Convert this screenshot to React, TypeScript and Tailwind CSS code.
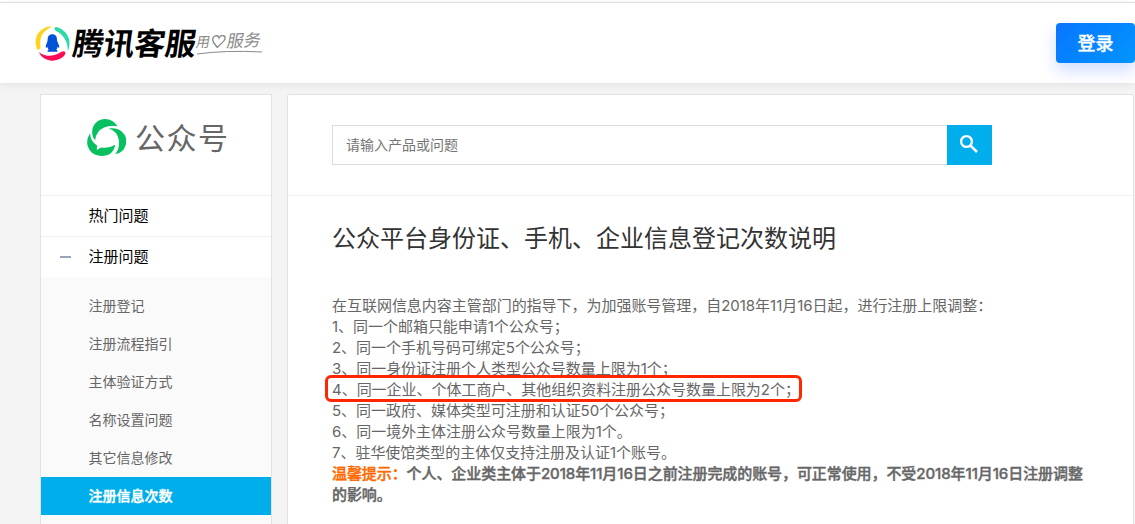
import { useState } from "react";
import clsx from "clsx";

const menuItems = [
  "注册登记",
  "注册流程指引",
  "主体验证方式",
  "名称设置问题",
  "其它信息修改",
  "注册信息次数",
];

const rules = [
  "1、同一个邮箱只能申请1个公众号；",
  "2、同一个手机号码可绑定5个公众号；",
  "3、同一身份证注册个人类型公众号数量上限为1个；",
  "4、同一企业、个体工商户、其他组织资料注册公众号数量上限为2个；",
  "5、同一政府、媒体类型可注册和认证50个公众号；",
  "6、同一境外主体注册公众号数量上限为1个。",
  "7、驻华使馆类型的主体仅支持注册及认证1个账号。",
];

const TencentIcon = () => (
  <svg viewBox="46 76 105 105" className="h-[35px] w-[35px] shrink-0">
    <path d="M98 78 Q74 76 58 95 Q42 116 51 144 Q54 149 60 145 Q64 142 62 134 Q59 108 76 92 Q86 82 98 78Z" fill="#ffd21f" />
    <path d="M105 82 Q106 78 113 80 Q139 89 148 115 Q152 134 145 151 Q144 120 126 102 Q118 95 109 91 Q104 88 105 82Z" fill="#2ad9a5" />
    <path d="M57 154 Q66 163 82 165 Q104 167 124 154 Q132 149 137 155 Q139 161 132 167 Q116 181 95 180 Q69 178 57 154Z" fill="#ff0a55" />
    <path d="M98 101 C88 101 84 108 84 117 C84 124 78 131 78 139 Q79 144 84 139 Q84 144 87 147 Q82 149 84 153 H113 Q115 149 110 147 Q113 144 113 139 Q118 144 119 139 C119 131 112 124 112 117 C112 108 108 101 98 101Z" fill="#0052d9" />
  </svg>
);

const AccountIcon = () => (
  <svg viewBox="171 101 117 112" className="h-[37px] w-[39px] shrink-0" fill="#07c160">
    <path d="M195 165 Q186 155 186 140 A39 39 0 0 1 225 101 Q250 102 263 123 Q242 118 222 127 Q198 138 195 165Z" />
    <path d="M236 130 Q262 126 277 140 A39 39 0 0 1 256 207 Q270 190 267 165 Q262 138 236 130Z" />
    <path d="M180 144 Q180 168 201 181 L200 195 L213 187 Q237 191 256 179 Q250 213 214 213 Q181 212 172 181 Q168 161 180 144Z" />
  </svg>
);

const SearchIcon = () => (
  <svg viewBox="0 0 24 24" className="mr-[2px] mb-[2px] h-6 w-6" fill="none" stroke="currentColor">
    <circle cx="9.5" cy="9.5" r="5.4" strokeWidth="2.3" />
    <path d="M13.6 13.6 L20 20" strokeWidth="2.6" />
  </svg>
);

const Header = () => (
  <header className="relative z-10 flex h-[81px] shrink-0 items-center justify-between border-t border-[#dcdcdc] bg-white pl-[35px] shadow-[0_2px_8px_rgba(0,0,0,0.07)]">
    <div className="flex items-center">
      <TencentIcon />
      <span className="ml-[3px] inline-block -skew-x-[8deg] text-[31px] leading-[35px] font-bold tracking-[-0.2px] whitespace-nowrap text-black">
        腾讯客服
      </span>
      <div className="flex w-[67px] flex-col text-[#8a8a8a]">
        <div className="flex -skew-x-[12deg] -rotate-2 items-center text-[14px] leading-[18px]">
          <span>用</span>
          <svg viewBox="0 0 18 16" className="h-[14px] w-[17px] shrink-0" fill="none" stroke="currentColor" strokeWidth="1.5">
            <path d="M9 4 C7 0 1 1 2 6 C3 10 7 12 9 15 C11 11 16 9 16 5 C16 1 10 0 9 4Z" />
          </svg>
          <span className="text-[17px]">服务</span>
        </div>
        <svg viewBox="0 0 67 5" className="h-[5px] w-[67px]" fill="none" stroke="currentColor">
          <path d="M1 4 Q30 0 66 2" />
        </svg>
      </div>
    </div>
    <button className="h-10 w-[79px] rounded-[4px] bg-linear-135 from-[#0a75ff] to-[#0595ff] text-[18px] font-medium text-white shadow-[0_8px_16px_rgba(30,90,255,0.2)] [-webkit-text-stroke:0.3px]">
      登录
    </button>
  </header>
);

const Sidebar = () => {
  const [active, setActive] = useState("注册信息次数");

  return (
    <aside className="w-[232px] shrink-0 border border-[#e2e2e2] bg-[#fafafa]">
      <div className="flex h-[101px] items-start border-b border-[#f0f0f0] bg-white pt-6 pl-[46px]">
        <AccountIcon />
        <span className="ml-[9px] text-[30px] leading-[38px] tracking-[1.5px] text-[#666]">
          公众号
        </span>
      </div>
      <div className="flex h-[41px] items-center border-b border-[#f0f0f0] bg-white pl-[47.5px] text-[15px] text-black">
        热门问题
      </div>
      <div className="flex h-10 items-center bg-white pl-[19px] text-[15px] text-black">
        <span className="mr-[17.5px] h-[2px] w-[11px] bg-[#98a5b8]" />
        注册问题
      </div>
      <ul className="pt-[10px]">
        {menuItems.map((item) => (
          <li
            key={item}
            onClick={() => setActive(item)}
            className={clsx(
              "flex h-[38px] cursor-pointer items-center pl-[47.5px] text-sm",
              active === item
                ? "bg-[#00aeec] font-medium text-white [-webkit-text-stroke:0.4px]"
                : "text-[#666]"
            )}
          >
            {item}
          </li>
        ))}
      </ul>
    </aside>
  );
};

const Article = () => (
  <article className="px-11 pt-[26px]">
    <h1 className="text-2xl leading-[34px] text-[#333]">
      公众平台身份证、手机、企业信息登记次数说明
    </h1>
    <div className="mt-[39px] w-[760px] text-[15px] leading-[21px] tracking-[-0.03px] text-[#666]">
      <p>在互联网信息内容主管部门的指导下，为加强账号管理，自2018年11月16日起，进行注册上限调整：</p>
      {rules.map((rule, index) => (
        <p key={rule} className="relative">
          {rule}
          {index === 3 && (
            <span className="absolute -top-[4px] -left-[7px] h-[27px] w-[477px] rounded-[6px] border-[3px] border-[#ff2600]" />
          )}
        </p>
      ))}
      <p className="font-medium tracking-[-0.08px] [-webkit-text-stroke:0.4px]">
        <span className="text-[#ff6a00]">温馨提示：</span>
        个人、企业类主体于2018年11月16日之前注册完成的账号，可正常使用，不受2018年11月16日注册调整的影响。
      </p>
    </div>
  </article>
);

export default function App() {
  return (
    <div className="flex h-[524px] flex-col overflow-hidden bg-[#f4f4f4] font-[Inter,'Noto_Sans_CJK_SC',sans-serif]">
      <div className="h-[2px] shrink-0 bg-white" />
      <Header />
      <div className="flex h-[520px] shrink-0 gap-[15px] pt-[11px] pl-10">
        <Sidebar />
        <main className="w-[847px] shrink-0 rounded-[2px] border border-[#e2e2e2] bg-white">
          <div className="flex h-[101px] border-b border-[#f0f0f0] pt-[30px] pl-11">
            <input
              className="h-10 w-[615px] border border-r-0 border-[#dcdcdc] px-[13px] pb-[2px] text-sm text-[#333] placeholder:text-[#757575] focus:outline-none"
              placeholder="请输入产品或问题"
            />
            <button className="flex h-10 w-[45px] items-center justify-center bg-[#00aeec] text-white">
              <SearchIcon />
            </button>
          </div>
          <Article />
        </main>
      </div>
    </div>
  );
}
